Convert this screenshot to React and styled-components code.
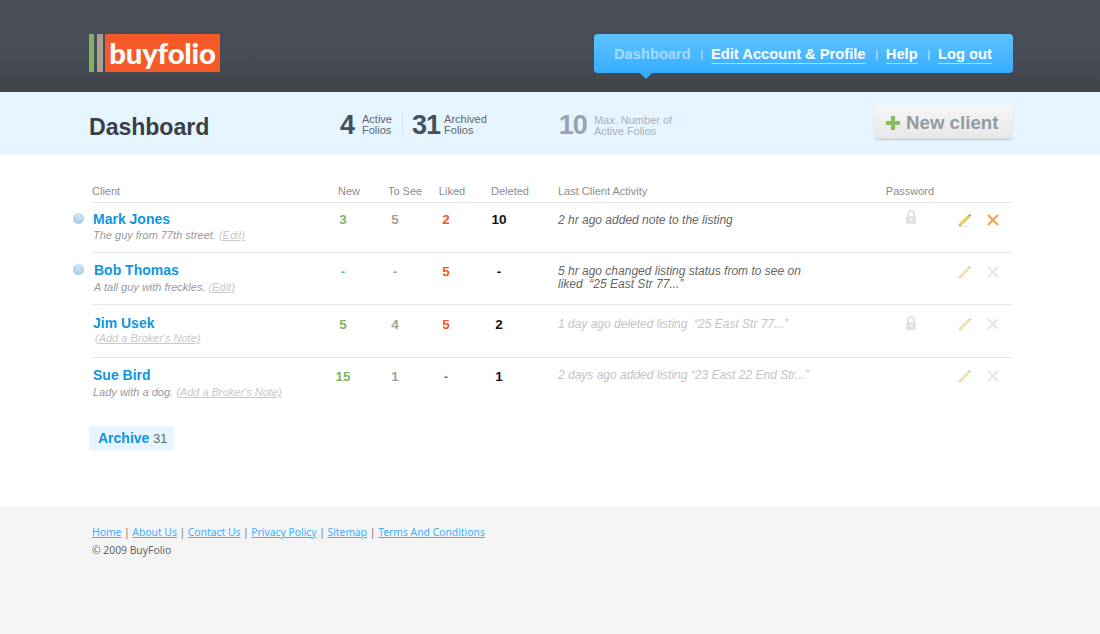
import React from 'react'
import styled, { createGlobalStyle } from 'styled-components'

const GlobalStyle = createGlobalStyle`
  html, body {
    margin: 0;
    padding: 0;
    background: #fff;
    font-family: "Liberation Sans", Arial, sans-serif;
  }
`

const Page = styled.div`
  width: 1100px;
  height: 634px;
  display: flex;
  flex-direction: column;
  overflow: hidden;
`

const TopBar = styled.header`
  height: 92px;
  box-sizing: border-box;
  padding: 34px 87px 0 89px;
  display: flex;
  justify-content: space-between;
  align-items: flex-start;
  background: linear-gradient(#4a4d57 0, #484c56 60%, #414448 100%);
`

const Logo = styled.div`
  display: flex;
  height: 38px;
`

const LogoBar = styled.div`
  width: ${(p) => p.$w}px;
  margin-right: ${(p) => p.$gap}px;
  background: ${(p) => p.$color};
`

const LogoMark = styled.div`
  width: 115px;
  background: #f55a28;
  color: #fff;
  font-family: Lato, sans-serif;
  font-weight: 900;
  font-size: 29.3px;
  line-height: 37px;
  letter-spacing: -0.2px;
  text-align: center;
`

const Nav = styled.nav`
  position: relative;
  width: 419px;
  height: 39px;
  box-sizing: border-box;
  padding: 2px 0 0 20px;
  display: flex;
  align-items: center;
  white-space: nowrap;
  border-radius: 4px;
  background: linear-gradient(#5fc3ff, #38adff);
  font-size: 14.7px;
  font-weight: bold;
  color: #fff;
  &::after {
    content: '';
    position: absolute;
    left: 46px;
    top: 39px;
    border-left: 6px solid transparent;
    border-right: 6px solid transparent;
    border-top: 6px solid #38adff;
  }
`

const NavItem = styled.a`
  color: ${(p) => (p.$active ? '#a5dcff' : '#fff')};
  border-bottom: ${(p) => (p.$active ? 'none' : '1px solid #a5dcff')};
  line-height: 17px;
  padding-bottom: ${(p) => (p.$active ? '1px' : '0')};
`

const NavSep = styled.span`
  width: 2px;
  height: 10px;
  margin: 0 8.3px 0 10px;
  background: #8fd2ff;
`

const SubBar = styled.div`
  height: 63px;
  box-sizing: border-box;
  padding: 0 87px 0 89px;
  display: flex;
  background: #e6f5ff;
`

const Title = styled.h1`
  width: 251px;
  margin: 21px 0 0;
  font-size: 23.2px;
  line-height: 28px;
  font-weight: bold;
  letter-spacing: -0.1px;
  color: #3a3f47;
`

const Stat = styled.div`
  display: flex;
  align-items: center;
  height: 26px;
  margin-top: 20px;
  padding-right: ${(p) => p.$pr || 0}px;
  margin-right: ${(p) => p.$mr || 0}px;
  border-right: ${(p) => (p.$divider ? '1px solid #d8e8f2' : 'none')};
`

const StatNumber = styled.span`
  font-size: 27px;
  font-weight: bold;
  line-height: 26px;
  margin-right: ${(p) => p.$gap}px;
  letter-spacing: -1px;
  color: ${(p) => (p.$muted ? '#98a3af' : '#44505f')};
`

const StatLabel = styled.span`
  font-size: 11px;
  line-height: 11px;
  padding-top: ${(p) => (p.$muted ? '2px' : '0')};
  color: ${(p) => (p.$muted ? '#a9b1b8' : '#5f666d')};
`

const NewClient = styled.button`
  width: 139px;
  height: 33px;
  margin: 14px 0 0 auto;
  padding: 0 0 0 12px;
  display: flex;
  align-items: center;
  gap: 6px;
  border: 0;
  border-radius: 4px;
  background: linear-gradient(#f6f6f6, #e6e6e6);
  box-shadow: 0 1px 1px #b9c6d0;
  font-family: "Liberation Sans", Arial, sans-serif;
  font-size: 18.7px;
  font-weight: bold;
  color: #939aa2;
`

const Main = styled.main`
  flex: 1;
  padding: 28px 88px 0 92px;
`

const Table = styled.div`
  position: relative;
`

const Row = styled.div`
  position: relative;
  height: ${(p) => p.$h}px;
  box-sizing: border-box;
  display: grid;
  grid-template-columns: 226px 62px 50px 44px 72px 12px 322px 70px 30px 26px 1fr;
  border-bottom: ${(p) => (p.$last ? 'none' : '1px solid #e6e6e6')};
`

const HeadCell = styled.div`
  font-size: 11px;
  line-height: 14px;
  padding-top: 1px;
  padding-right: ${(p) => p.$pr || 0}px;
  color: #8d8d8d;
  text-align: ${(p) => (p.$left ? 'left' : 'center')};
  grid-column: ${(p) => p.$col || 'auto'};
`

const ClientCell = styled.div`
  position: relative;
  padding: ${(p) => p.$top}px 0 0 ${(p) => p.$indent || 1}px;
`

const Bullet = styled.span`
  position: absolute;
  left: -19px;
  top: ${(p) => p.$top}px;
  width: 11px;
  height: 11px;
  border-radius: 50%;
  background: radial-gradient(circle at 50% 30%, #cfe6f5, #9cc8e6);
`

const ClientName = styled.a`
  display: block;
  font-size: 14px;
  line-height: 16px;
  font-weight: bold;
  color: #0f95e0;
`

const ClientNote = styled.div`
  margin-top: ${(p) => p.$mt ?? 3}px;
  padding-left: ${(p) => p.$pl || 0}px;
  font-size: 11px;
  line-height: 13px;
  font-style: italic;
  color: #999;
`

const NoteLink = styled.a`
  color: #c8c8c8;
  text-decoration: underline;
`

const Count = styled.div`
  padding-top: ${(p) => p.$top}px;
  padding-right: ${(p) => p.$shift}px;
  text-align: center;
  font-size: 13.5px;
  line-height: 16px;
  font-weight: bold;
  color: ${(p) => p.$color};
`

const Activity = styled.div`
  grid-column: 7;
  padding-top: ${(p) => p.$top}px;
  font-size: 12px;
  line-height: 13px;
  font-style: italic;
  color: ${(p) => (p.$faded ? '#c4c4c4' : '#666')};
  width: 280px;
  white-space: pre-wrap;
`

const IconCell = styled.div`
  display: flex;
  justify-content: center;
  align-items: flex-start;
  padding-top: ${(p) => p.$top}px;
  padding-right: ${(p) => p.$pr || 0}px;
`

const Archive = styled.div`
  display: inline-block;
  margin: 20px 0 0 -3px;
  padding: 0 7px 0 9px;
  height: 24px;
  line-height: 24px;
  background: #e6f5ff;
  font-size: 14px;
  font-weight: bold;
  color: #0f95e0;
`

const ArchiveCount = styled.span`
  font-size: 12.5px;
  font-weight: normal;
  color: #666;
`

const Footer = styled.footer`
  height: 127px;
  box-sizing: border-box;
  padding: 16px 92px 0;
  background: #f5f5f5;
  font-family: "Noto Sans", sans-serif;
  font-size: 10.35px;
  line-height: 18px;
  color: #777;
`

const FooterLinks = styled.div`
  display: flex;
`

const FooterLink = styled.a`
  color: #3fb0ff;
  text-decoration: underline;
`

const FooterSep = styled.span`
  margin: 0 2.6px;
`

const Copyright = styled.div`
  color: #666;
`

const PlusIcon = () => (
  <svg width="14" height="14" viewBox="0 0 14 14">
    <path d="M5 0h4v5h5v4H9v5H5V9H0V5h5z" fill="#8dbb5f" />
  </svg>
)

const LockIcon = () => (
  <svg width="12" height="14" viewBox="0 0 12 14">
    <path d="M3 6V4a3 3 0 0 1 6 0v2" fill="none" stroke="#e2e2e2" strokeWidth="1.8" />
    <rect x="1" y="6" width="10" height="8" rx="1" fill="#e2e2e2" />
    <circle cx="6" cy="9.5" r="1.1" fill="#fff" />
  </svg>
)

const PencilIcon = ({ faded }) => (
  <svg width="14" height="14" viewBox="0 0 14 14" opacity={faded ? 0.5 : 1}>
    <path d="M1 13 L1.6 10.8 L10.6 2 L12.2 3.6 L3.2 12.4 Z" fill="#f0d552" stroke="#a8953a" strokeWidth="0.5" />
    <path d="M10.6 2 L11.6 1 L13.2 2.6 L12.2 3.6 Z" fill="#8f8f8f" />
    <path d="M1 13.4 H10" stroke="#d2d2d2" strokeWidth="0.6" />
  </svg>
)

const CloseIcon = ({ faded }) => (
  <svg width="12" height="12" viewBox="0 0 12 12">
    <path d="M1 1 L11 11 M11 1 L1 11" stroke={faded ? '#e6e6e6' : '#fb9f52'} strokeWidth="2.2" />
  </svg>
)

const clients = [
  {
    name: 'Mark Jones', note: 'The guy from 77th street.', link: '(Edit)', dot: 10, h: 50, top: 8, noteMt: 2,
    numTop: 9, actTop: 11, iconTop: 10, lockTop: 7,
    counts: ['3', '5', '2', '10'], activity: '2 hr ago added note to the listing', lock: true, live: true,
  },
  {
    name: 'Bob Thomas', note: 'A tall guy with freckles.', link: '(Edit)', dot: 11, indent: 2, h: 52, top: 9,
    numTop: 11, actTop: 12, iconTop: 12,
    counts: ['-', '-', '5', '-'], activity: '5 hr ago changed listing status from to see on\nliked  “25 East Str 77...”',
  },
  {
    name: 'Jim Usek', link: "(Add a Broker's Note)", h: 53, top: 10, noteMt: 1, notePl: 2,
    numTop: 12, actTop: 13, iconTop: 12, lockTop: 11,
    counts: ['5', '4', '5', '2'], activity: '1 day ago deleted listing  “25 East Str 77...”', faded: true, lock: true,
  },
  {
    name: 'Sue Bird', note: 'Lady with a dog.', link: "(Add a Broker's Note)", h: 48, top: 9,
    numTop: 11, actTop: 11, iconTop: 11,
    counts: ['15', '1', '-', '1'], activity: '2 days ago added listing “23 East 22 End Str...”', faded: true, last: true,
  },
]

const countColors = ['#7fb562', '#a89f8e', '#f2582a', '#111']
const countShifts = [12, 20, 12, 22]

const footerLinks = ['Home', 'About Us', 'Contact Us', 'Privacy Policy', 'Sitemap', 'Terms And Conditions']

export default function App() {
  return (
    <Page>
      <GlobalStyle />
      <TopBar>
        <Logo>
          <LogoBar $w={5} $gap={3} $color="#7fb562" />
          <LogoBar $w={6} $gap={2} $color="#a89f8e" />
          <LogoMark>buyfolio</LogoMark>
        </Logo>
        <Nav>
          <NavItem $active>Dashboard</NavItem>
          <NavSep />
          <NavItem>Edit Account &amp; Profile</NavItem>
          <NavSep />
          <NavItem>Help</NavItem>
          <NavSep />
          <NavItem>Log out</NavItem>
        </Nav>
      </TopBar>
      <SubBar>
        <Title>Dashboard</Title>
        <Stat $divider $pr={10} $mr={9}>
          <StatNumber $gap={8}>4</StatNumber>
          <StatLabel>Active<br />Folios</StatLabel>
        </Stat>
        <Stat $mr={72}>
          <StatNumber $gap={4}>31</StatNumber>
          <StatLabel>Archived<br />Folios</StatLabel>
        </Stat>
        <Stat>
          <StatNumber $muted $gap={7}>10</StatNumber>
          <StatLabel $muted>Max. Number of<br />Active Folios</StatLabel>
        </Stat>
        <NewClient>
          <PlusIcon />
          New client
        </NewClient>
      </SubBar>
      <Main>
        <Table>
          <Row $h={20}>
            <HeadCell $left>Client</HeadCell>
            <HeadCell>New</HeadCell>
            <HeadCell>To See</HeadCell>
            <HeadCell>Liked</HeadCell>
            <HeadCell>Deleted</HeadCell>
            <HeadCell $left $col={7}>Last Client Activity</HeadCell>
            <HeadCell $pr={10}>Password</HeadCell>
          </Row>
          {clients.map((c) => (
            <Row key={c.name} $h={c.h} $last={c.last}>
              <ClientCell $top={c.top} $indent={c.indent}>
                {c.dot && <Bullet $top={c.dot} />}
                <ClientName>{c.name}</ClientName>
                <ClientNote $mt={c.noteMt} $pl={c.notePl}>
                  {c.note && `${c.note} `}
                  <NoteLink>{c.link}</NoteLink>
                </ClientNote>
              </ClientCell>
              {c.counts.map((n, i) => (
                <Count key={i} $top={c.numTop} $shift={countShifts[i]} $color={countColors[i]}>{n}</Count>
              ))}
              <Activity $top={c.actTop} $faded={c.faded}>{c.activity}</Activity>
              <IconCell $top={c.lockTop} $pr={8}>{c.lock && <LockIcon />}</IconCell>
              <IconCell $top={c.iconTop}><PencilIcon faded={!c.live} /></IconCell>
              <IconCell $top={c.iconTop + 1}><CloseIcon faded={!c.live} /></IconCell>
            </Row>
          ))}
        </Table>
        <Archive>
          Archive <ArchiveCount>31</ArchiveCount>
        </Archive>
      </Main>
      <Footer>
        <FooterLinks>
          {footerLinks.map((l, i) => (
            <React.Fragment key={l}>
              {i > 0 && <FooterSep>|</FooterSep>}
              <FooterLink>{l}</FooterLink>
            </React.Fragment>
          ))}
        </FooterLinks>
        <Copyright>© 2009 BuyFolio</Copyright>
      </Footer>
    </Page>
  )
}
